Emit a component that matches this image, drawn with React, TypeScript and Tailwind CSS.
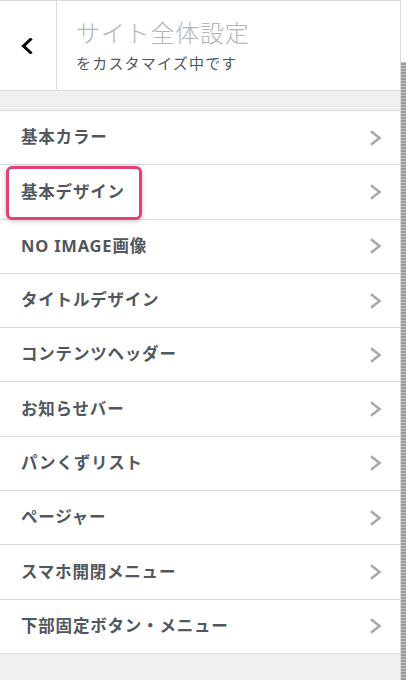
const sections = [
  "基本カラー",
  "基本デザイン",
  "NO IMAGE画像",
  "タイトルデザイン",
  "コンテンツヘッダー",
  "お知らせバー",
  "パンくずリスト",
  "ページャー",
  "スマホ開閉メニュー",
  "下部固定ボタン・メニュー",
];

function Chevron({ left = false, className = "" }: { left?: boolean; className?: string }) {
  return (
    <svg width="12" height="16" viewBox="0 0 12 16" className={className} fill="none">
      <polyline
        points={left ? "9.5,1.5 2.5,8 9.5,14.5" : "2,2 9.5,8 2,14"}
        stroke="currentColor"
        strokeWidth={left ? 3 : 2.6}
        strokeLinecap="square"
        strokeLinejoin="miter"
      />
    </svg>
  );
}

export default function App() {
  return (
    <div
      className="flex h-[680px] w-[406px] overflow-hidden bg-white"
      style={{ fontFamily: '"Noto Sans", "Noto Sans CJK JP", sans-serif' }}
    >
      <div className="flex w-[401px] flex-col border-r border-[#dcdcde]">
        <header className="flex h-[91px] border-y border-[#dcdcde] bg-white">
          <button className="flex w-[57px] items-center justify-center border-r border-[#dcdcde] text-black">
            <Chevron left className="-ml-[2px] mt-[1px]" />
          </button>
          <div className="flex flex-col justify-center pl-[19px] pt-[1px]">
            <span className="text-[24px] font-light leading-[30px] tracking-[0.8px] text-[#b2b5b8]">
              サイト全体設定
            </span>
            <span className="mt-[4px] text-[15px] leading-[22px] tracking-[1.2px] text-[#50575e]">
              をカスタマイズ中です
            </span>
          </div>
        </header>

        <div className="h-[20px] border-b border-[#dcdcde] bg-[#f0f0f1]" />

        <ul className="bg-white">
          {sections.map((label, index) => (
            <li
              key={label}
              className="relative flex h-[54.3px] items-center justify-between border-b border-[#dcdcde] pl-[21px] pr-[18px]"
            >
              <span className="text-[16.5px] font-bold tracking-[0.8px] text-[#50575e]">{label}</span>
              <Chevron className="text-[#a7aaad]" />
              {index === 1 ? (
                <span className="absolute left-[6px] top-[1px] h-[54px] w-[136px] rounded-[6px] border-[3px] border-[#e2407a] shadow-[0_1px_5px_rgba(0,0,0,0.25)]" />
              ) : null}
            </li>
          ))}
        </ul>

        <div className="flex-1 bg-[#f0f0f1]" />
      </div>

      <div className="flex w-[5px] flex-col">
        <div className="h-[62px] bg-white" />
        <div className="flex-1 bg-[repeating-linear-gradient(0deg,#9a9a9a_0px,#9a9a9a_2px,#c4c4c4_2px,#c4c4c4_3px)]" />
      </div>
    </div>
  );
}
